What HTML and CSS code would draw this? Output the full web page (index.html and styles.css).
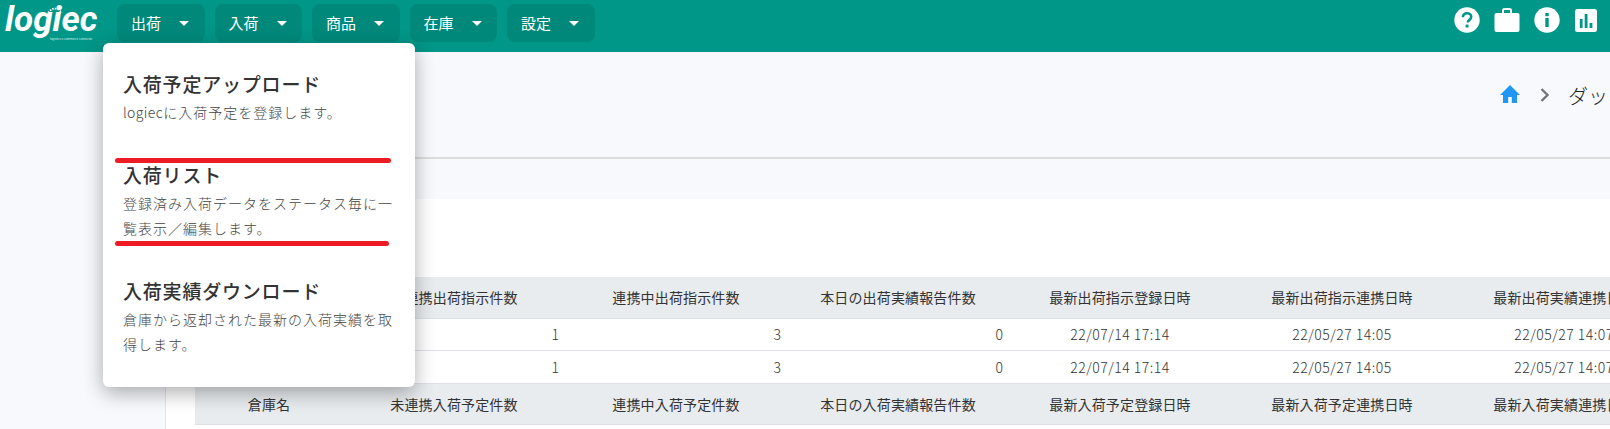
FILE: index.html
```html
<!DOCTYPE html>
<html lang="ja">
<head>
<meta charset="utf-8">
<title>logiec</title>
<link rel="stylesheet" href="styles.css">
</head>
<body>
<div class="page">
  <header class="topbar">
    <div class="logo">
      <svg class="logo-arc" width="16" height="8" viewBox="0 0 16 8"><path d="M1.500 7A7 7 0 0 1 14.500 7" fill="none" stroke="#fff" stroke-width="1.800" stroke-dasharray="1.600 1.100"/></svg>
      <span class="logo-word">logiec</span>
      <span class="logo-tag">logistics e-commerce connector</span>
    </div>
    <nav class="nav">
      <button class="nav-btn">出荷<i class="caret"></i></button>
      <button class="nav-btn">入荷<i class="caret"></i></button>
      <button class="nav-btn">商品<i class="caret"></i></button>
      <button class="nav-btn">在庫<i class="caret"></i></button>
      <button class="nav-btn">設定<i class="caret"></i></button>
    </nav>
    <div class="tools">
      <svg class="tool" width="26" height="26" viewBox="0 0 26 26"><circle cx="13" cy="13" r="12.700" fill="#fff"/><path d="M8.900 10.200c0-2.500 1.900-4 4.200-4 2.400 0 4.100 1.500 4.100 3.600 0 1.600-.9 2.500-2 3.300-1 .7-1.300 1.200-1.300 2.300" fill="none" stroke="#009688" stroke-width="2.600"/><rect x="11.600" y="17.600" width="2.900" height="2.900" fill="#009688"/></svg>
      <svg class="tool" width="26" height="26" viewBox="0 0 26 26"><path d="M9 6V3.500A1.500 1.500 0 0 1 10.500 2h5A1.500 1.500 0 0 1 17 3.500V6" fill="none" stroke="#fff" stroke-width="2"/><rect x="0.500" y="6" width="25" height="19" rx="2" fill="#fff"/></svg>
      <svg class="tool" width="26" height="26" viewBox="0 0 26 26"><circle cx="13" cy="13" r="12.700" fill="#fff"/><rect x="11.300" y="6" width="3.400" height="3.200" fill="#009688"/><rect x="11.300" y="11" width="3.400" height="9" fill="#009688"/></svg>
      <svg class="tool" width="24" height="26" viewBox="0 0 24 26"><rect x="1" y="2" width="22" height="23" rx="2.500" fill="#fff"/><rect x="5.800" y="12" width="2.800" height="9" fill="#009688"/><rect x="10.700" y="7" width="2.800" height="14" fill="#009688"/><rect x="15.600" y="16" width="2.800" height="5" fill="#009688"/></svg>
    </div>
  </header>

  <div class="dropdown">
    <div class="drop-item">
      <h3 class="drop-title">入荷予定アップロード</h3>
      <p class="drop-desc"><span class="latin">logiec</span>に入荷予定を登録します。</p>
    </div>
    <div class="drop-item">
      <h3 class="drop-title">入荷リスト</h3>
      <p class="drop-desc">登録済み入荷データをステータス毎に一覧表示／編集します。</p>
    </div>
    <div class="drop-item">
      <h3 class="drop-title">入荷実績ダウンロード</h3>
      <p class="drop-desc">倉庫から返却された最新の入荷実績を取得します。</p>
    </div>
    <span class="mark mark-a"></span>
    <span class="mark mark-b"></span>
  </div>

  <div class="body">
    <aside class="side"></aside>
    <main class="content">
      <div class="crumbs">
        <svg class="crumb-home" width="22" height="20" viewBox="0 0 22 20"><path d="M11 1 1 11h3v8h5.200v-6h3.600v6H18v-8h3z" fill="#2196f3"/></svg>
        <svg class="crumb-sep" width="12" height="16" viewBox="0 0 12 16"><path d="M2.500 2 8.500 8l-6 6" fill="none" stroke="#757575" stroke-width="2.400"/></svg>
        <span class="crumb-text">ダッシュボード</span>
      </div>
      <section class="card">
        <table class="grid">
          <colgroup>
            <col class="col-name"><col class="col"><col class="col"><col class="col"><col class="col"><col class="col"><col class="col">
          </colgroup>
          <tbody>
            <tr class="head">
              <th>倉庫名</th><th>未連携出荷指示件数</th><th>連携中出荷指示件数</th><th>本日の出荷実績報告件数</th><th>最新出荷指示登録日時</th><th>最新出荷指示連携日時</th><th>最新出荷実績連携日時</th>
            </tr>
            <tr>
              <td></td><td class="num">1</td><td class="num">3</td><td class="num">0</td><td class="date">22/07/14 17:14</td><td class="date">22/05/27 14:05</td><td class="date">22/05/27 14:07</td>
            </tr>
            <tr>
              <td></td><td class="num">1</td><td class="num">3</td><td class="num">0</td><td class="date">22/07/14 17:14</td><td class="date">22/05/27 14:05</td><td class="date">22/05/27 14:07</td>
            </tr>
            <tr class="head">
              <th>倉庫名</th><th>未連携入荷予定件数</th><th>連携中入荷予定件数</th><th>本日の入荷実績報告件数</th><th>最新入荷予定登録日時</th><th>最新入荷予定連携日時</th><th>最新入荷実績連携日時</th>
            </tr>
          </tbody>
        </table>
      </section>
    </main>
  </div>
</div>
</body>
</html>
```
FILE: styles.css
```css
* { box-sizing: border-box; }
html, body { margin: 0; height: 100%; overflow: hidden; }
body {
  font-family: "Noto Sans CJK JP", "Noto Sans", sans-serif;
  background: #f8f9fd;
  color: #333;
}
.page { position: relative; height: 429px; display: flex; flex-direction: column; overflow: hidden; }

.topbar {
  height: 52px;
  flex: none;
  background: #009688;
  display: flex;
  align-items: flex-start;
}
.logo { position: relative; width: 117px; height: 52px; flex: none; }
.logo-word {
  position: absolute;
  left: 5px;
  top: 3px;
  font-family: "Roboto", sans-serif;
  font-weight: 700;
  font-style: italic;
  font-size: 35px;
  line-height: 34px;
  color: #fff;
}
.logo-arc { position: absolute; left: 47px; top: 6px; }
.logo-tag {
  position: absolute;
  left: 50px;
  top: 37px;
  font-family: "Liberation Sans", sans-serif;
  font-size: 3px;
  line-height: 4px;
  white-space: nowrap;
  color: #d6efec;
}
.nav { display: flex; gap: 10px; padding-top: 4px; }
.nav-btn {
  width: 87.500px;
  height: 38px;
  padding: 0 0 0 14px;
  border: 0;
  border-radius: 8px;
  background: #00897b;
  color: #fff;
  font: 400 15px/36px "Noto Sans CJK JP", sans-serif;
  text-align: left;
  display: flex;
  align-items: center;
}
.caret {
  margin-left: 18px;
  width: 0;
  height: 0;
  border-left: 5px solid transparent;
  border-right: 5px solid transparent;
  border-top: 5px solid #fff;
}
.tools { margin-left: auto; display: flex; padding: 7px 12px 0 0; align-items: flex-start; }
.tool { margin-left: 14px; display: block; }

.dropdown {
  position: absolute;
  left: 103px;
  top: 43px;
  width: 312px;
  height: 344px;
  padding: 28px 20px 0;
  background: #fff;
  border-radius: 6px;
  box-shadow: 0 6px 20px rgba(0, 0, 0, .32);
  z-index: 5;
}
.drop-item + .drop-item { margin-top: 36px; }
.drop-title {
  margin: 0 0 3px;
  font-size: 19px;
  font-weight: 500;
  line-height: 26px;
  letter-spacing: .8px;
  color: #333;
}
.drop-desc {
  margin: 0;
  font-size: 14px;
  font-weight: 300;
  line-height: 25.600px;
  letter-spacing: 1px;
  color: #444;
}
.latin { letter-spacing: .4px; }
.mark { position: absolute; height: 5px; border-radius: 3px; background: #ed1c24; }
.mark-a { left: 12px; top: 115px; width: 276px; }
.mark-b { left: 12px; top: 198px; width: 274px; }

.body { flex: 1; display: flex; min-height: 0; }
.side { width: 165px; flex: none; }
.content { flex: 1; min-width: 0; display: flex; flex-direction: column; }
.crumbs {
  height: 107px;
  flex: none;
  margin-bottom: 40px;
  padding: 32px 0 0 1334px;
  border-bottom: 2px solid #ddd;
  display: flex;
  align-items: flex-start;
  white-space: nowrap;
  overflow: hidden;
}
.crumb-home, .crumb-sep { flex: none; }
.crumb-sep { margin: 3px 0 0 18px; }
.crumb-text { flex: none; margin-left: 17px; font-size: 20px; line-height: 24px; font-weight: 300; color: #222; }

.card {
  flex: 1;
  min-height: 0;
  background: #fff;
  border-left: 1px solid #e5e5e5;
  padding: 78px 0 0 29px;
  overflow: hidden;
}
.grid { width: 1480px; table-layout: fixed; border-collapse: collapse; font-size: 14px; font-weight: 300; color: #333; }
.col-name { width: 148px; }
.col { width: 222px; }
.grid th, .grid td { padding: 0 8px; border-bottom: 1px solid #dee2e6; white-space: nowrap; }
.head th { height: 41px; background: #e9ecef; font-weight: 400; text-align: center; letter-spacing: .15px; }
.grid td { height: 32.500px; }
.grid .num { text-align: right; padding-right: 6px; }
.date { text-align: center; letter-spacing: .5px; }
```
